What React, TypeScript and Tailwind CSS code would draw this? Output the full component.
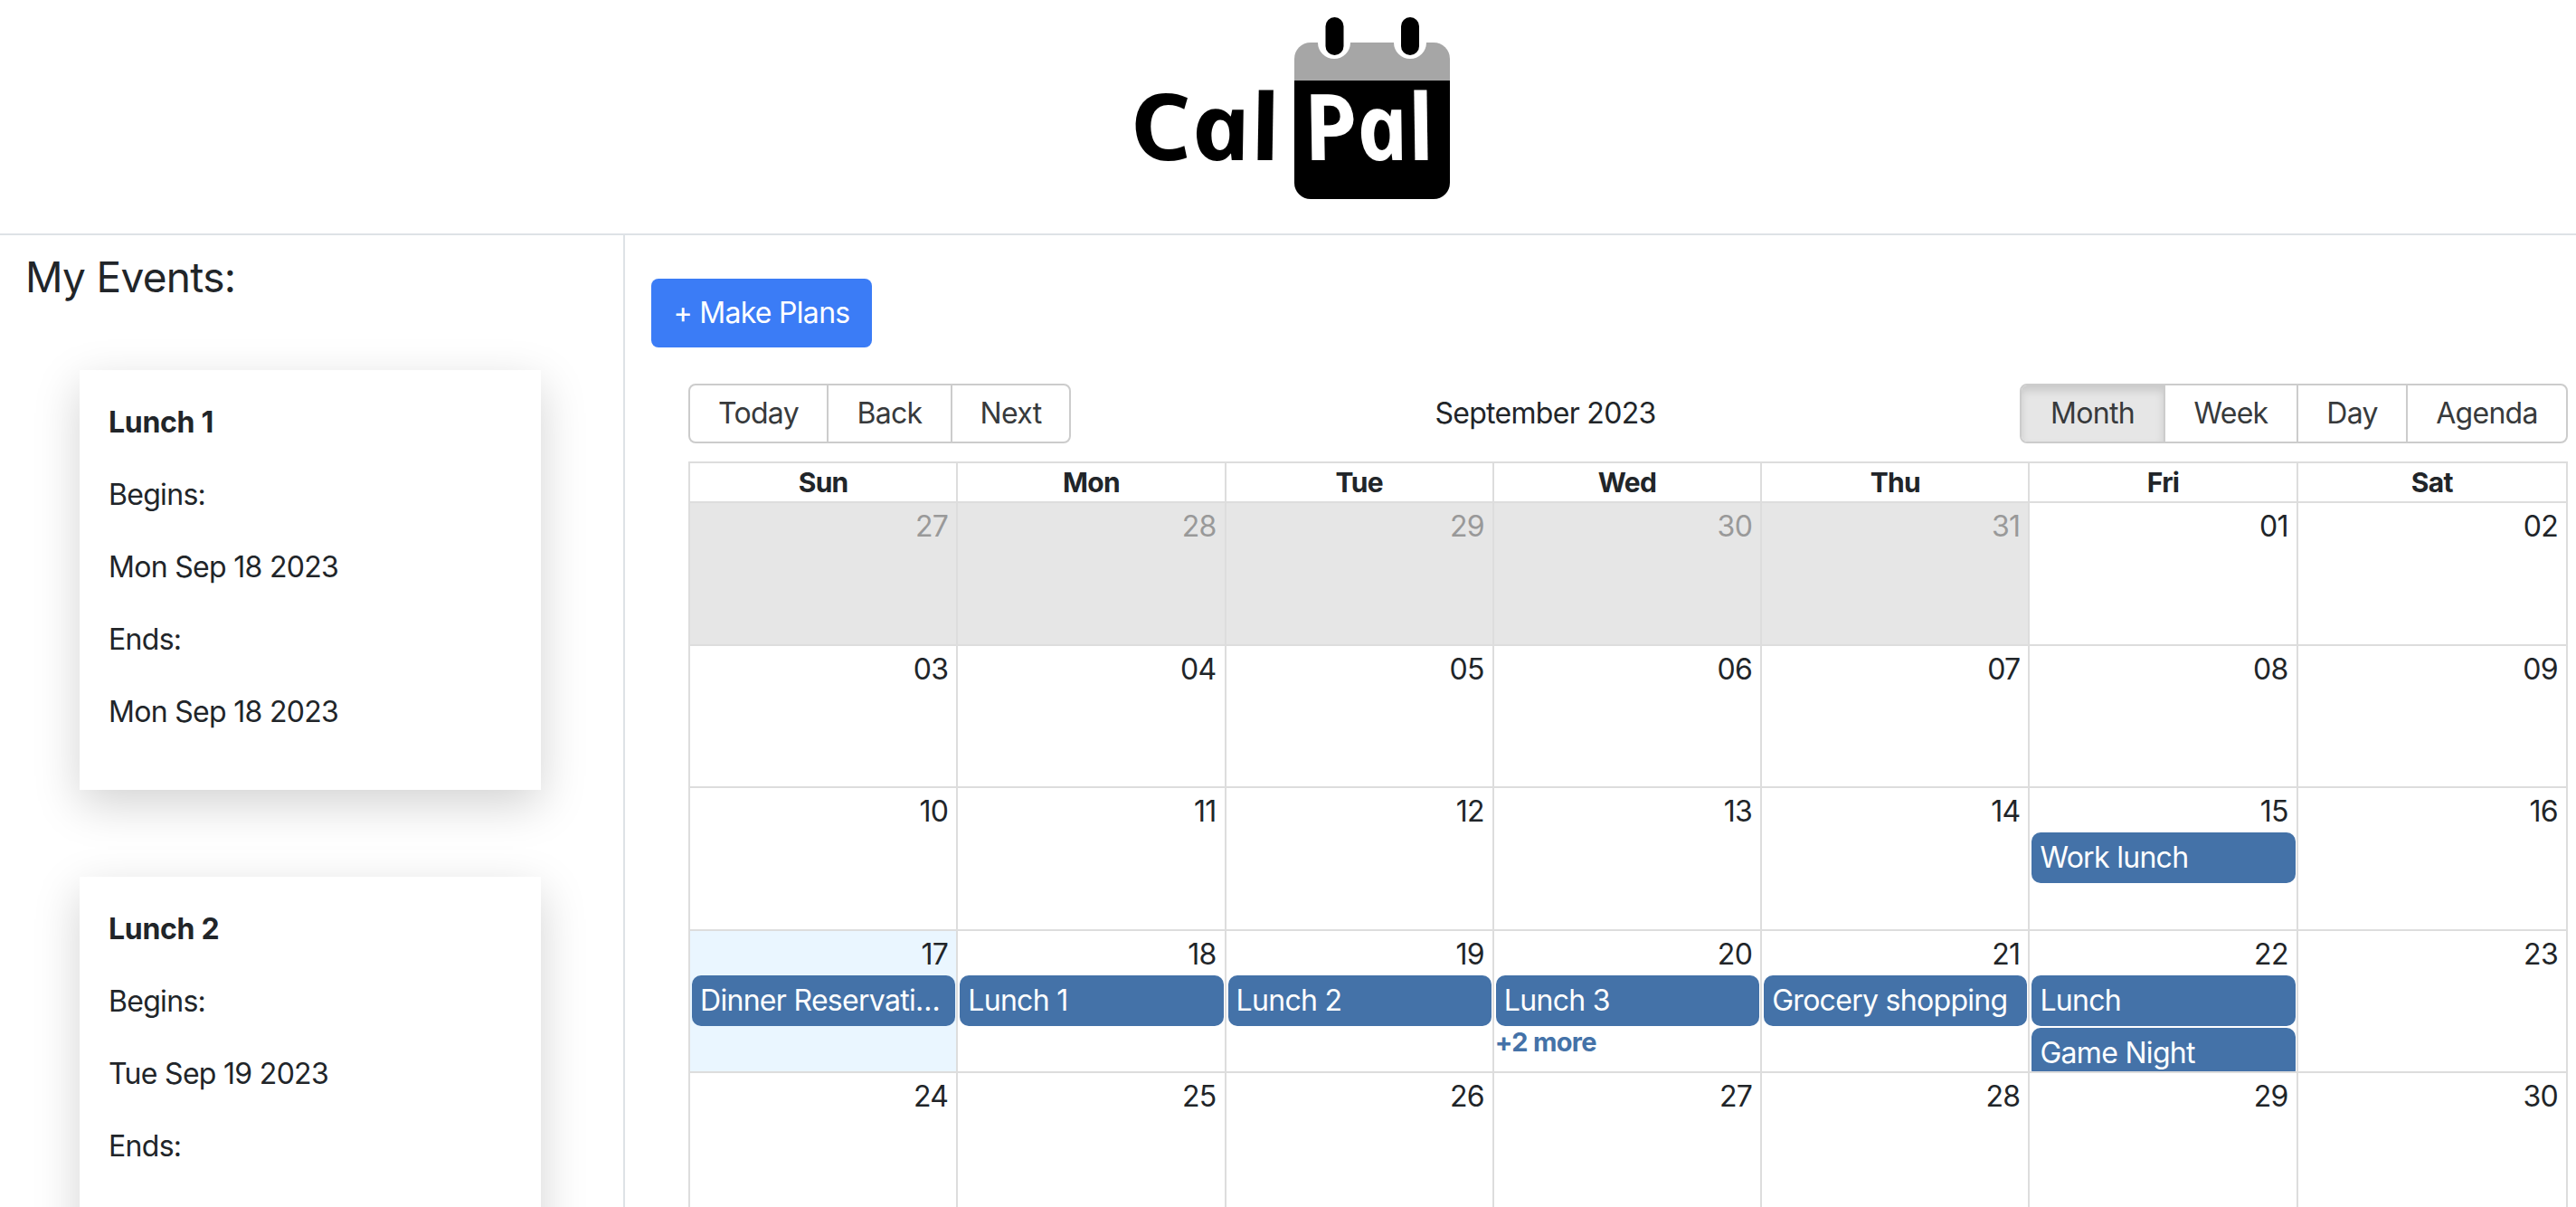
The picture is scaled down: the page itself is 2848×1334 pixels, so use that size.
import React from 'react';

type Day = { label: string; off?: boolean; today?: boolean; events?: string[]; more?: string };

const weekdays = ['Sun', 'Mon', 'Tue', 'Wed', 'Thu', 'Fri', 'Sat'];

const days: Day[] = [
  { label: '27', off: true }, { label: '28', off: true }, { label: '29', off: true }, { label: '30', off: true }, { label: '31', off: true }, { label: '01' }, { label: '02' },
  { label: '03' }, { label: '04' }, { label: '05' }, { label: '06' }, { label: '07' }, { label: '08' }, { label: '09' },
  { label: '10' }, { label: '11' }, { label: '12' }, { label: '13' }, { label: '14' }, { label: '15', events: ['Work lunch'] }, { label: '16' },
  { label: '17', today: true, events: ['Dinner Reservations'] },
  { label: '18', events: ['Lunch 1'] },
  { label: '19', events: ['Lunch 2'] },
  { label: '20', events: ['Lunch 3'], more: '+2 more' },
  { label: '21', events: ['Grocery shopping'] },
  { label: '22', events: ['Lunch', 'Game Night'] },
  { label: '23' },
  { label: '24' }, { label: '25' }, { label: '26' }, { label: '27' }, { label: '28' }, { label: '29' }, { label: '30' },
];

const myEvents = [
  { title: 'Lunch 1', lines: ['Begins:', 'Mon Sep 18 2023', 'Ends:', 'Mon Sep 18 2023'] },
  { title: 'Lunch 2', lines: ['Begins:', 'Tue Sep 19 2023', 'Ends:', 'Tue Sep 19 2023'] },
];

// Open Sans italic has the single-storey a of the logo, skewX stands it back upright
const Logo = () => (
  <svg width="360" height="240" viewBox="1244 0 360 240" className="block">
    <path d="M1449 47H1585A18 18 0 0 1 1603 65V89H1431V65A18 18 0 0 1 1449 47Z" fill="#a6a6a6" />
    <path d="M1431 89H1603V202A18 18 0 0 1 1585 220H1449A18 18 0 0 1 1431 202Z" fill="#000" />
    <path d="M1457 40H1493V47A18 18 0 0 1 1457 47Z" fill="#fff" />
    <path d="M1541 40H1577V47A18 18 0 0 1 1541 47Z" fill="#fff" />
    <rect x="1465.5" y="19" width="20" height="42" rx="10" fill="#000" />
    <rect x="1549" y="19" width="20" height="42" rx="10" fill="#000" />
    <g className="[font-family:'Open_Sans',sans-serif] italic font-bold text-[102px] tracking-normal">
      <text transform="translate(1256 177) skewX(12)" textLength="165" lengthAdjust="spacingAndGlyphs" fill="#000">Cal</text>
      <text transform="translate(1448 177) skewX(12)" textLength="143" lengthAdjust="spacingAndGlyphs" fill="#fff">Pal</text>
    </g>
  </svg>
);

const ToolbarGroup = ({ items, active }: { items: { label: string; w: string }[]; active?: string }) => (
  <div className="flex h-[66px] overflow-hidden rounded-lg border-2 border-[#ccc]">
    {items.map((item, i) => (
      <div
        key={item.label}
        className={`${item.w} flex items-center justify-center text-[#373a3c] ${i > 0 ? 'border-l-2 border-[#ccc]' : ''} ${
          item.label === active ? 'bg-[#e6e6e6] shadow-[inset_0_6px_10px_rgba(0,0,0,0.125)]' : ''
        }`}
      >
        {item.label}
      </div>
    ))}
  </div>
);

const DayCell = ({ day, col }: { day: Day; col: number }) => (
  <div
    className={`overflow-hidden border-b-2 border-[#ddd] ${col < 6 ? 'border-r-2' : ''} ${
      day.off ? 'bg-[#e6e6e6]' : day.today ? 'bg-[#eaf6ff]' : ''
    }`}
  >
    <div className={`h-[49px] pr-[9px] pt-[2px] text-right leading-[48px] ${day.off ? 'text-[#999]' : 'text-[#212529]'}`}>
      {day.label}
    </div>
    <div className="flex flex-col gap-[2px]">
      {day.events?.map((name) => (
        <div key={name} className="ml-[2px] mr-[1px] h-[56px] shrink-0 truncate rounded-[10px] bg-[#4472a8] px-[9px] leading-[56px] text-white">
          {name}
        </div>
      ))}
    </div>
    {day.more && <div className="pl-[1px] pt-[2px] text-[29px] font-bold leading-[32px] text-[#4472a8]">{day.more}</div>}
  </div>
);

export default function App() {
  return (
    <div className="h-[1334px] overflow-hidden bg-white text-[32px] tracking-[-0.7px] text-[#212529] [font-family:Inter,sans-serif]">
      <header className="flex h-[260px] justify-center border-b-2 border-[#dee2e6]">
        <Logo />
      </header>
      <div className="flex">
        <aside className="h-[1074px] w-[691px] shrink-0 overflow-hidden border-r-2 border-[#dee2e6]">
          <h3 className="pl-[28px] pt-[17px] text-[46px] leading-[58px]">My Events:</h3>
          <div className="flex flex-col gap-[96px] pl-[88px] pt-[74px]">
            {myEvents.map((ev) => (
              <div key={ev.title} className="h-[464px] w-[510px] shrink-0 bg-white px-[32px] pt-[34px] shadow-[0_16px_48px_rgba(0,0,0,0.175)]">
                <p className="mb-[32px] font-bold leading-[48px] tracking-[-0.3px]">{ev.title}</p>
                {ev.lines.map((line, i) => (
                  <p key={i} className="mb-[32px] leading-[48px]">{line}</p>
                ))}
              </div>
            ))}
          </div>
        </aside>
        <main className="flex-1 pl-[29px] pt-[48px]">
          <button className="h-[76px] w-[244px] rounded-lg bg-[#3b7cf6] text-white">+ Make Plans</button>
          <div className="ml-[41px] w-[2078px]">
            <div className="mt-[40px] flex items-center justify-between">
              <ToolbarGroup items={[{ label: 'Today', w: 'w-[151px]' }, { label: 'Back', w: 'w-[137px]' }, { label: 'Next', w: 'w-[131px]' }]} />
              <span>September 2023</span>
              <ToolbarGroup
                active="Month"
                items={[{ label: 'Month', w: 'w-[157px]' }, { label: 'Week', w: 'w-[147px]' }, { label: 'Day', w: 'w-[121px]' }, { label: 'Agenda', w: 'w-[177px]' }]}
              />
            </div>
            <div className="mt-[20px] border-x-2 border-t-2 border-[#ddd]">
              <div className="grid h-[44px] grid-cols-7 border-b-2 border-[#ddd]">
                {weekdays.map((d, i) => (
                  <div key={d} className={`text-center text-[30px] font-bold leading-[43px] ${i < 6 ? 'border-r-2 border-[#ddd]' : ''}`}>
                    {d}
                  </div>
                ))}
              </div>
              <div className="grid grid-cols-7 auto-rows-[157.5px]">
                {days.map((day, i) => (
                  <DayCell key={i} day={day} col={i % 7} />
                ))}
              </div>
            </div>
          </div>
        </main>
      </div>
    </div>
  );
}
